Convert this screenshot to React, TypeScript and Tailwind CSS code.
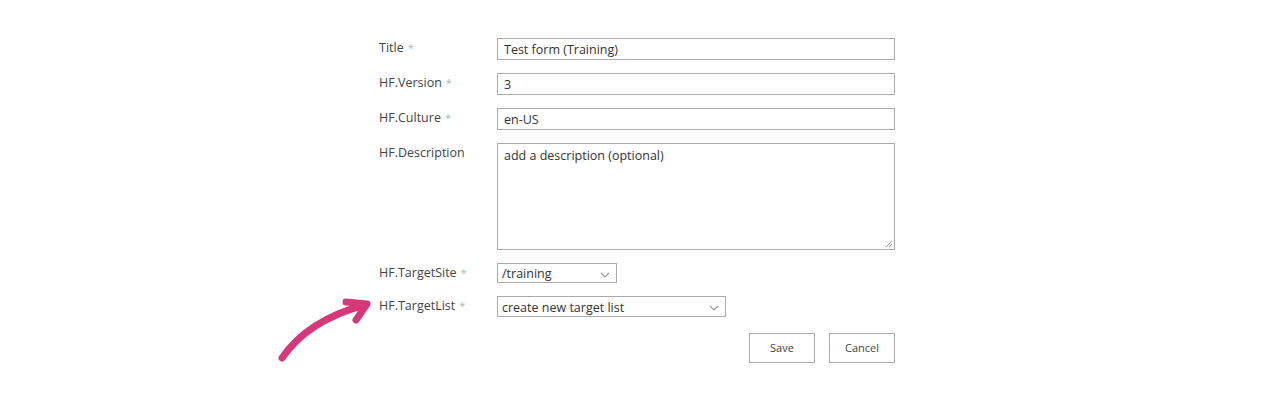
import React from 'react';

const font = { fontFamily: '"Open Sans", "Noto Sans", "Liberation Sans", sans-serif' };

function Label({ text, required }: { text: string; required?: boolean }) {
  return (
    <div className="text-[12.5px] text-[#444] pt-[1px] leading-[18px]">
      {text}
      {required && <span className="text-[11px] text-[#a9bab2] ml-[4px] align-top">*</span>}
    </div>
  );
}

function Chevron() {
  return (
    <svg width="10" height="6" viewBox="0 0 10 6" className="absolute right-[6px] top-[8px]">
      <path d="M1 1 L5 5 L9 1" fill="none" stroke="#999" strokeWidth="1.1" />
    </svg>
  );
}

export default function App() {
  return (
    <div className="relative w-[1280px] h-[400px] bg-white" style={font}>
      <div className="pl-[379px] pt-[38px]">
        <div className="grid grid-cols-[118px_398px] gap-y-[13px]">
          <Label text="Title" required />
          <div className="h-[22px] border border-[#ababab] px-[6px] pt-[1px] text-[12.5px] text-[#333] leading-[20px]">
            Test form (Training)
          </div>

          <Label text="HF.Version" required />
          <div className="h-[22px] border border-[#ababab] px-[6px] pt-[1px] text-[12.5px] text-[#333] leading-[20px]">
            3
          </div>

          <Label text="HF.Culture" required />
          <div className="h-[22px] border border-[#ababab] px-[6px] pt-[1px] text-[12.5px] text-[#333] leading-[20px]">
            en-US
          </div>

          <Label text="HF.Description" />
          <div className="relative h-[107px] border border-[#ababab] px-[6px] pt-[2px] text-[12.5px] text-[#333] leading-[20px]">
            add a description (optional)
            <svg width="8" height="8" viewBox="0 0 8 8" className="absolute right-[1px] bottom-[1px]">
              <path d="M7 1 L1 7 M7 4 L4 7" stroke="#999" strokeWidth="1" />
            </svg>
          </div>

          <Label text="HF.TargetSite" required />
          <div className="relative w-[120px] h-[20px] border border-[#ababab] px-[4px] pt-[1px] text-[12.5px] text-[#333] leading-[18px]">
            /training
            <Chevron />
          </div>

          <Label text="HF.TargetList" required />
          <div className="relative w-[229px] h-[21px] border border-[#ababab] px-[4px] pt-[1px] text-[12.5px] text-[#333] leading-[19px]">
            create new target list
            <Chevron />
          </div>
        </div>

        <div className="w-[516px] flex justify-end gap-[14px] mt-[16px]">
          <button className="w-[66px] h-[30px] border border-[#ababab] bg-white pt-[1px] text-[11px] text-[#444]">
            Save
          </button>
          <button className="w-[66px] h-[30px] border border-[#ababab] bg-white pt-[1px] text-[11px] text-[#444]">
            Cancel
          </button>
        </div>
      </div>

      <svg
        width="110"
        height="80"
        viewBox="0 0 110 80"
        className="absolute left-[270px] top-[290px]"
      >
        <path
          d="M12 68 Q38 30 95 15"
          fill="none"
          stroke="#d6387a"
          strokeWidth="7"
          strokeLinecap="round"
        />
        <path
          d="M76 12 L97 14 L86 30"
          fill="none"
          stroke="#d6387a"
          strokeWidth="7"
          strokeLinecap="round"
          strokeLinejoin="round"
        />
      </svg>
    </div>
  );
}
